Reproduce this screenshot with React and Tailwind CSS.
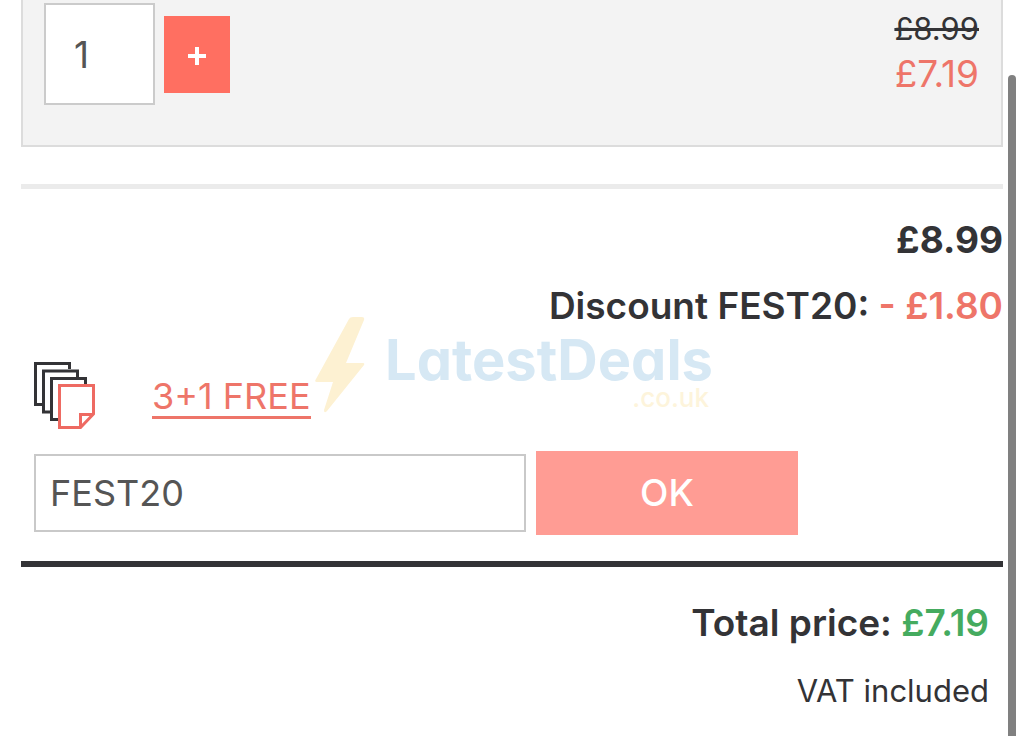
import React, { useState } from 'react'

function StackIcon() {
  return (
    <svg width="62" height="68" viewBox="0 0 62 68" fill="none" className="shrink-0" aria-hidden="true">
      <g stroke="#333336" strokeWidth="3">
        <path d="M8 43.500H1.500V2.500H35.500V8" />
        <path d="M16 51H9.500V10H43.500V16" />
        <path d="M24 58.500H17.500V17.500H51.500V24" />
      </g>
      <path d="M25.500 24.500H59.500V53L46.500 66.500H25.500Z" fill="#fff" stroke="#ee6a62" strokeWidth="3" />
      <path d="M46.500 66V53.500H59" stroke="#ee6a62" strokeWidth="3" />
    </svg>
  )
}

function Watermark() {
  return (
    <div className="pointer-events-none absolute top-[316px] left-[315px] flex">
      <svg width="50" height="97" viewBox="0 0 50 97" aria-hidden="true">
        <path d="M34 3Q35 1 38 1H47Q50 1 49 4L31 47H48Q50 47 49 49L12 95Q9 98 9 94L18 66H2Q-1 66 1 63Z" fill="#fdf1d2" />
      </svg>
      <div className="ml-5 pt-4 text-right font-['Inter'] [font-feature-settings:'cv11']">
        <div className="text-[56px] leading-[56px] font-bold text-[#d6e8f4]">LatestDeals</div>
        <div className="pr-1 text-[26px] leading-[20px] font-medium text-[#fdf4db]">.co.uk</div>
      </div>
    </div>
  )
}

function CartItem() {
  const [qty, setQty] = useState(1)
  return (
    <section className="flex justify-between border-x-2 border-b-2 border-[#dcdcdc] bg-[#f3f3f3] pt-[3px] pr-[22px] pb-10 pl-[21px]">
      <div className="flex items-center gap-[9px]">
        <input
          type="text"
          aria-label="Quantity"
          value={qty}
          onChange={(e) => setQty(e.target.value)}
          className="h-[102px] w-[111px] border-2 border-[#cbcbcb] bg-white px-[28px] text-[37px] text-[#555]"
        />
        <button
          type="button"
          aria-label="Add one"
          onClick={() => setQty(Number(qty) + 1)}
          className="flex h-[77px] w-[66px] items-center justify-center bg-[#ff6f61] pt-1"
        >
          <svg width="20" height="20" viewBox="0 0 20 20" stroke="#fff" strokeWidth="4" aria-hidden="true">
            <path d="M10 1V19M1 10H19" />
          </svg>
        </button>
      </div>
      <div className="pt-1 text-right">
        <p className="text-[31px] leading-[44px] text-[#333336] line-through">£8.99</p>
        <p className="text-[37px] leading-[46px] text-[#ee7569]">£7.19</p>
      </div>
    </section>
  )
}

function App() {
  const [code, setCode] = useState('FEST20')
  return (
    <div className="relative min-h-screen overflow-hidden bg-white px-[21px] font-['Inter',sans-serif] text-[#333336]">
      <CartItem />

      <hr className="mt-[37px] border-t-5 border-[#ebebeb]" />

      <div className="mt-[18px] text-right text-[37px] leading-[66px] font-bold">
        <p>£8.99</p>
        <p className="font-semibold">
          Discount FEST20: <span className="text-[#ee7569]">- £1.80</span>
        </p>
      </div>

      <div className="mt-[22px] flex items-center pl-[13px]">
        <StackIcon />
        <a href="#offer" className="ml-14 border-b-3 border-[#ee7569] pt-1 text-[36px] leading-[40px] text-[#ee7569]">
          3+1 FREE
        </a>
      </div>

      <form className="mt-[22px] flex items-center gap-[10px] pl-[13px]" onSubmit={(e) => e.preventDefault()}>
        <input
          type="text"
          aria-label="Discount code"
          value={code}
          onChange={(e) => setCode(e.target.value)}
          className="h-[78px] w-[492px] border-2 border-[#c9c9c9] bg-white px-[14px] text-[36px] text-[#555]"
        />
        <button type="submit" className="h-[84px] w-[262px] bg-[#ff9c94] text-[37px] font-medium text-white">
          OK
        </button>
      </form>

      <hr className="mt-[26px] border-t-6 border-[#333336]" />

      <div className="pt-[23px] pr-[14px] text-right">
        <p className="text-[37px] leading-[66px] font-semibold">
          Total price: <span className="text-[#45ab5f]">£7.19</span>
        </p>
        <p className="text-[31px] leading-[70px]">VAT included</p>
      </div>

      <Watermark />
      <div className="absolute top-[75px] right-2 bottom-0 w-2 rounded-t-full bg-[#808080]" />
    </div>
  )
}

export default App
